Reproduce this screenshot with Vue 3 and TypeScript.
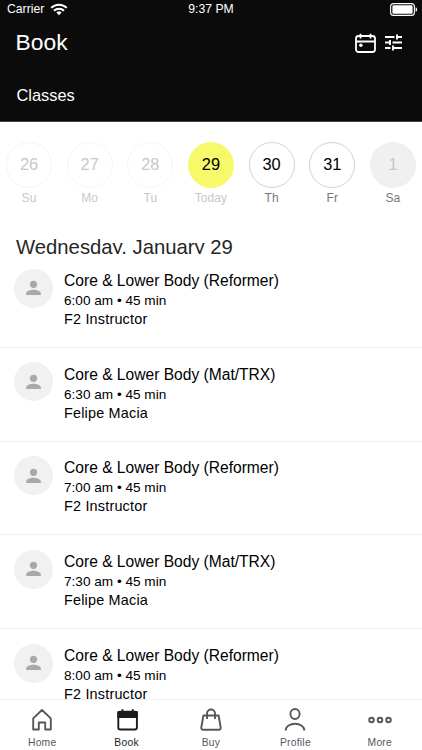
<script setup lang="ts">
interface Day { num: number; label: string; kind: 'past' | 'today' | 'open' | 'closed' }
interface ClassItem { name: string; time: string; instructor: string }
interface Tab { label: string; icon: string; active?: boolean }

const days: Day[] = [
  { num: 26, label: 'Su', kind: 'past' },
  { num: 27, label: 'Mo', kind: 'past' },
  { num: 28, label: 'Tu', kind: 'past' },
  { num: 29, label: 'Today', kind: 'today' },
  { num: 30, label: 'Th', kind: 'open' },
  { num: 31, label: 'Fr', kind: 'open' },
  { num: 1, label: 'Sa', kind: 'closed' },
]

const classes: ClassItem[] = [
  { name: 'Core & Lower Body (Reformer)', time: '6:00 am', instructor: 'F2 Instructor' },
  { name: 'Core & Lower Body (Mat/TRX)', time: '6:30 am', instructor: 'Felipe Macia' },
  { name: 'Core & Lower Body (Reformer)', time: '7:00 am', instructor: 'F2 Instructor' },
  { name: 'Core & Lower Body (Mat/TRX)', time: '7:30 am', instructor: 'Felipe Macia' },
  { name: 'Core & Lower Body (Reformer)', time: '8:00 am', instructor: 'F2 Instructor' },
]

const tabs: Tab[] = [
  { label: 'Home', icon: 'home' },
  { label: 'Book', icon: 'book', active: true },
  { label: 'Buy', icon: 'buy' },
  { label: 'Profile', icon: 'profile' },
  { label: 'More', icon: 'more' },
]
</script>

<template>
  <div class="screen">
    <header class="header">
      <div class="status">
        <div class="carrier">
          <span>Carrier</span>
          <svg width="18" height="13" viewBox="0 0 18 13" fill="none" stroke="#fff" stroke-width="2">
            <path d="M1.2 4.9a11 11 0 0 1 15.6 0" />
            <path d="M4 7.8a7 7 0 0 1 10 0" />
            <path d="M9 12.2 6.4 9.6a3.7 3.7 0 0 1 5.2 0z" fill="#fff" stroke="none" />
          </svg>
        </div>
        <span class="clock">9:37 PM</span>
        <svg class="battery" width="28" height="13" viewBox="0 0 28 13">
          <rect x="0.6" y="0.6" width="23.8" height="11.8" rx="3" fill="none" stroke="#fff" stroke-width="1.1" />
          <rect x="2.4" y="2.3" width="20.2" height="8.4" rx="1.3" fill="#fff" />
          <path d="M25.6 4.2c2 .7 2 3.9 0 4.6z" fill="#fff" />
        </svg>
      </div>
      <div class="titlebar">
        <h1>Book</h1>
        <div class="actions">
          <svg width="21" height="20" viewBox="0 0 21 20" fill="none" stroke="#fff" stroke-width="1.8">
            <rect x="1" y="3" width="19" height="16" rx="2.5" />
            <path d="M1 8.5h19M5.5.7v4.8M15.5.7v4.8" />
            <circle cx="5.9" cy="12.3" r="1.7" fill="#fff" stroke="none" />
          </svg>
          <svg width="17" height="17" viewBox="0 0 17 17" fill="none" stroke="#fff" stroke-width="1.9">
            <path d="M0 3h9.5M12 3h5M12 .4v5.2M0 8.5h5M5 5.9v5.2M7.5 8.5H17M0 14h5.5M8 14h9M8 11.4v5.2" />
          </svg>
        </div>
      </div>
      <div class="section">Classes</div>
    </header>

    <nav class="days">
      <div v-for="d in days" :key="d.num" class="day" :class="d.kind">
        <span class="num">{{ d.num }}</span>
        <span class="weekday">{{ d.label }}</span>
      </div>
    </nav>

    <h2 class="date">Wednesday, January 29</h2>

    <main class="list">
      <article v-for="c in classes" :key="c.time" class="row">
        <div class="avatar">
          <svg width="15" height="16" viewBox="0 0 15 16" fill="#a9a9a9">
            <circle cx="7.5" cy="4.3" r="3.6" />
            <path d="M.2 15v-1.5C.2 10.9 4.5 9.7 7.5 9.7s7.3 1.2 7.3 3.8V15z" />
          </svg>
        </div>
        <div class="info">
          <div class="name">{{ c.name }}</div>
          <div class="time">{{ c.time }} • 45 min</div>
          <div class="teacher">{{ c.instructor }}</div>
        </div>
      </article>
    </main>

    <footer class="tabs">
      <div v-for="t in tabs" :key="t.label" class="tab" :class="{ active: t.active }">
        <svg width="26" height="24" viewBox="0 0 26 24" fill="none" stroke="currentColor" stroke-width="1.9" stroke-linejoin="round">
          <path v-if="t.icon === 'home'" d="M4.2 10.4 13 2l8.8 8.4V21.5h-5.6v-7H9.8v7H4.2z" />
          <template v-else-if="t.icon === 'book'">
            <rect x="4.3" y="3.8" width="18.6" height="17.7" rx="2" />
            <path d="M4.3 4h18.6v5H4.3zM8.5 1.2V4M18.8 1.2V4" fill="currentColor" />
          </template>
          <template v-else-if="t.icon === 'buy'">
            <path d="M5.4 7.5h15.2L22.7 19.5q.2 2.2-2 2.2H5.3q-2.200 0-2-2.200z" />
            <path d="M9 11V5.5a4 4 0 0 1 8 0V11" />
          </template>
          <template v-else-if="t.icon === 'profile'">
            <ellipse cx="13" cy="6" rx="4.6" ry="5" />
            <path d="M3.7 22.5c0-9 18.6-9 18.6 0" />
          </template>
          <g v-else>
            <circle cx="4.5" cy="12" r="2.3" />
            <circle cx="13" cy="12" r="2.3" />
            <circle cx="21.5" cy="12" r="2.3" />
          </g>
        </svg>
        <span>{{ t.label }}</span>
      </div>
    </footer>
  </div>
</template>

<style>
body { margin: 0; background: #fff; }
</style>

<style scoped>
.screen {
  width: 422px;
  height: 750px;
  display: flex;
  flex-direction: column;
  overflow: hidden;
  background: #fff;
  color: #0b0b0b;
  font-family: "Liberation Sans", Arial, sans-serif;
}
svg { display: block; flex: none; }
.header {
  box-sizing: border-box;
  flex: none;
  height: 122px;
  background: #0b0b0b;
  border-bottom: 1px solid #444;
  color: #fff;
}
.status {
  display: grid;
  grid-template-columns: 1fr auto 1fr;
  height: 19px;
  padding: 0 4px 0 7px;
  align-items: center;
  font-size: 12.2px;
  line-height: 19px;
}
.carrier { display: flex; align-items: center; gap: 6px; }
.clock { margin-right: 3px; }
.battery { justify-self: end; }
.titlebar {
  display: flex;
  justify-content: space-between;
  align-items: center;
  height: 46px;
  padding: 0 20px 0 15.5px;
}
h1 { margin: 0; font-size: 22.8px; font-weight: 400; line-height: 44px; letter-spacing: 0.1px; }
.actions { display: flex; align-items: center; gap: 9px; padding-top: 1px; }
.section { padding: 19px 16.5px 0; font-size: 16.4px; line-height: 22px; }
.days {
  flex: none;
  display: flex;
  justify-content: space-between;
  height: 113px;
  padding: 20px 6px 0;
  box-sizing: border-box;
}
.day { display: flex; flex-direction: column; align-items: center; width: 46px; }
.num {
  box-sizing: border-box;
  width: 46px;
  height: 46px;
  border: 1px solid #d2d2d2;
  border-radius: 50%;
  text-align: center;
  font-size: 16.4px;
  line-height: 43px;
  color: #000;
}
.weekday { margin-top: 3px; font-size: 12px; line-height: 15px; letter-spacing: 0.1px; color: #777; }
.past .num { border-color: #f5f5f5; color: #c8c8c8; }
.past .weekday, .today .weekday { color: #c8c8c8; }
.today .num { background: #f7f96b; border-color: #f7f96b; }
.closed .num { background: #f0f0f0; border-color: #f0f0f0; color: #c8c8c8; }
.date {
  flex: none;
  margin: 0;
  height: 19px;
  padding-left: 16px;
  overflow: hidden;
  font-size: 20.3px;
  font-weight: 400;
  line-height: 25px;
  color: #262626;
}
.list { flex: 1; min-height: 0; overflow: hidden; }
.row {
  box-sizing: border-box;
  display: flex;
  gap: 11px;
  height: 93.75px;
  padding: 14.5px 14px 0;
  border-bottom: 1px solid #f1f1f1;
}
.avatar {
  display: grid;
  place-items: center;
  flex: none;
  width: 39px;
  height: 39px;
  border-radius: 50%;
  background: #f1f1f1;
}
.info { padding-top: 2.25px; white-space: nowrap; color: #000; }
.name { font-size: 15.6px; line-height: 20px; }
.time { font-size: 13.6px; line-height: 19px; }
.teacher { font-size: 14.4px; line-height: 19px; letter-spacing: 0.2px; }
.tabs {
  box-sizing: border-box;
  flex: none;
  display: grid;
  grid-template-columns: repeat(5, 1fr);
  height: 51px;
  border-top: 1px solid #f1f1f1;
  background: #fff;
}
.tab {
  display: flex;
  flex-direction: column;
  align-items: center;
  padding-top: 8px;
  color: #56565c;
  font-size: 10.3px;
  line-height: 14px;
  letter-spacing: 0.25px;
}
.tab span { margin-top: 4px; }
.active { color: #1c1c20; }
</style>
